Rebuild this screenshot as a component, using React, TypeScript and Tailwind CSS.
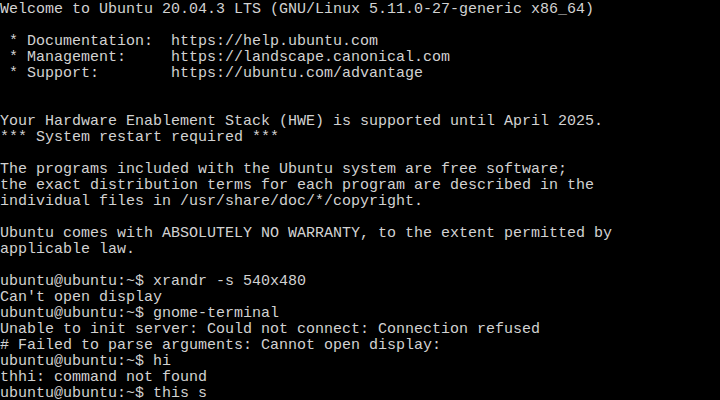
const lines = [
  "Welcome to Ubuntu 20.04.3 LTS (GNU/Linux 5.11.0-27-generic x86_64)",
  "",
  " * Documentation:  https://help.ubuntu.com",
  " * Management:     https://landscape.canonical.com",
  " * Support:        https://ubuntu.com/advantage",
  "",
  "",
  "Your Hardware Enablement Stack (HWE) is supported until April 2025.",
  "*** System restart required ***",
  "",
  "The programs included with the Ubuntu system are free software;",
  "the exact distribution terms for each program are described in the",
  "individual files in /usr/share/doc/*/copyright.",
  "",
  "Ubuntu comes with ABSOLUTELY NO WARRANTY, to the extent permitted by",
  "applicable law.",
  "",
  "ubuntu@ubuntu:~$ xrandr -s 540x480",
  "Can't open display",
  "ubuntu@ubuntu:~$ gnome-terminal",
  "Unable to init server: Could not connect: Connection refused",
  "# Failed to parse arguments: Cannot open display:",
  "ubuntu@ubuntu:~$ hi",
  "thhi: command not found",
  "ubuntu@ubuntu:~$ this s",
];

export default function App() {
  return (
    <div className="w-[720px] h-[400px] bg-black overflow-hidden">
      <div className="pt-[2px] font-['Liberation_Mono',monospace] text-[15px] text-[#d2d2d2]">
        {lines.map((l, i) => (
          <div key={i} className="h-[16px] leading-[16px] whitespace-pre">
            {l}
          </div>
        ))}
      </div>
    </div>
  );
}
